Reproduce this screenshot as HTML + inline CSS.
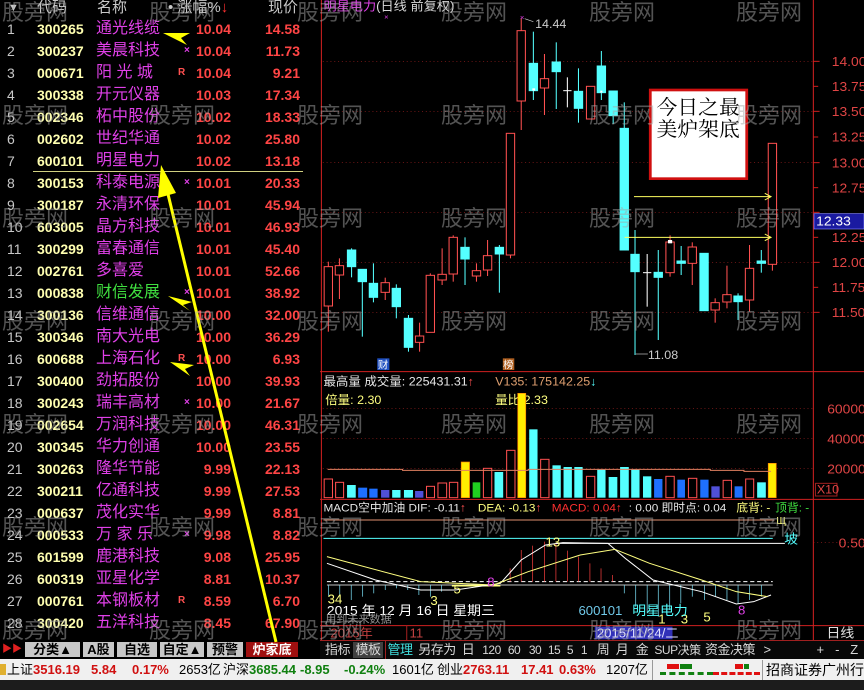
<!DOCTYPE html>
<html><head><meta charset="utf-8"><style>
*{margin:0;padding:0;box-sizing:border-box}
body{width:864px;height:690px;background:#000;position:relative;overflow:hidden;font-family:"Liberation Sans","Noto Sans CJK SC",sans-serif;}
.a{position:absolute;white-space:nowrap}
.r{position:absolute;left:0;width:320px;height:18px;line-height:18px}
.r span{position:absolute;top:0}
.i{left:7px;color:#c8c8c8;font-size:14px}
.c{left:37px;color:#ffffb0;font-size:14px;font-weight:bold}
.n{left:96px;color:#e040e8;font-size:16px}
.f{left:178px;color:#ff5050;font-size:10px;font-weight:bold}
.p{right:89px;color:#ff4545;font-size:14px;font-weight:bold}
.q{right:20px;color:#ff4545;font-size:14px;font-weight:bold}
.wm{position:absolute;font-size:22px;line-height:22px;color:rgba(165,165,165,.5);font-family:"Noto Sans CJK SC",sans-serif;z-index:10;white-space:nowrap}
.tab{position:absolute;top:642px;height:15px;line-height:15px;font-size:13px;font-weight:bold;text-align:center;background:#c8c8c8;color:#000}
.tb{position:absolute;top:642px;height:16px;line-height:16px;font-size:13px;color:#d8d8d8;text-align:center;white-space:nowrap;letter-spacing:-0.5px}
.st{position:absolute;top:660px;height:20px;line-height:20px;font-size:13px;white-space:nowrap}
</style></head><body>

<div class="a" style="left:8px;top:0;color:#c8c8c8;font-size:11px;line-height:16px">▼</div>
<div class="a" style="left:37px;top:-1px;color:#c8c8c8;font-size:15px;line-height:18px">代码</div>
<div class="a" style="left:97px;top:-1px;color:#c8c8c8;font-size:15px;line-height:18px">名称</div>
<div class="a" style="left:168px;top:-1px;color:#c8c8c8;font-size:15px;line-height:18px">• 涨幅%<span style="color:#ff3030">↓</span></div>
<div class="a" style="left:268px;top:-1px;color:#c8c8c8;font-size:15px;line-height:18px">现价</div>

<div class="r" style="top:20px"><span class="i">1</span><span class="c">300265</span><span class="n">通光线缆</span><span class="p">10.04</span><span class="q">14.58</span></div>
<div class="r" style="top:42px"><span class="i">2</span><span class="c">300237</span><span class="n">美晨科技</span><span class="f" style="left:184px;color:#e040e8">×</span><span class="p">10.04</span><span class="q">11.73</span></div>
<div class="r" style="top:64px"><span class="i">3</span><span class="c">000671</span><span class="n">阳 光 城</span><span class="f">R</span><span class="p">10.04</span><span class="q">9.21</span></div>
<div class="r" style="top:86px"><span class="i">4</span><span class="c">300338</span><span class="n">开元仪器</span><span class="p">10.03</span><span class="q">17.34</span></div>
<div class="r" style="top:108px"><span class="i">5</span><span class="c">002346</span><span class="n">柘中股份</span><span class="p">10.02</span><span class="q">18.33</span></div>
<div class="r" style="top:130px"><span class="i">6</span><span class="c">002602</span><span class="n">世纪华通</span><span class="p">10.02</span><span class="q">25.80</span></div>
<div class="r" style="top:152px"><span class="i">7</span><span class="c">600101</span><span class="n">明星电力</span><span class="p">10.02</span><span class="q">13.18</span></div>
<div class="a" style="left:33px;top:171px;width:270px;height:1px;background:#d0d080"></div>
<div class="r" style="top:174px"><span class="i">8</span><span class="c">300153</span><span class="n">科泰电源</span><span class="f" style="left:184px;color:#e040e8">×</span><span class="p">10.01</span><span class="q">20.33</span></div>
<div class="r" style="top:196px"><span class="i">9</span><span class="c">300187</span><span class="n">永清环保</span><span class="p">10.01</span><span class="q">45.94</span></div>
<div class="r" style="top:218px"><span class="i">10</span><span class="c">603005</span><span class="n">晶方科技</span><span class="p">10.01</span><span class="q">46.93</span></div>
<div class="r" style="top:240px"><span class="i">11</span><span class="c">300299</span><span class="n">富春通信</span><span class="p">10.01</span><span class="q">45.40</span></div>
<div class="r" style="top:262px"><span class="i">12</span><span class="c">002761</span><span class="n">多喜爱</span><span class="p">10.01</span><span class="q">52.66</span></div>
<div class="r" style="top:284px"><span class="i">13</span><span class="c">000838</span><span class="n" style="color:#40e040">财信发展</span><span class="f" style="left:184px;color:#e040e8">×</span><span class="p">10.01</span><span class="q">38.92</span></div>
<div class="r" style="top:306px"><span class="i">14</span><span class="c">300136</span><span class="n">信维通信</span><span class="p">10.00</span><span class="q">32.00</span></div>
<div class="r" style="top:328px"><span class="i">15</span><span class="c">300346</span><span class="n">南大光电</span><span class="p">10.00</span><span class="q">36.29</span></div>
<div class="r" style="top:350px"><span class="i">16</span><span class="c">600688</span><span class="n">上海石化</span><span class="f">R</span><span class="p">10.00</span><span class="q">6.93</span></div>
<div class="r" style="top:372px"><span class="i">17</span><span class="c">300400</span><span class="n">劲拓股份</span><span class="p">10.00</span><span class="q">39.93</span></div>
<div class="r" style="top:394px"><span class="i">18</span><span class="c">300243</span><span class="n">瑞丰高材</span><span class="f" style="left:184px;color:#e040e8">×</span><span class="p">10.00</span><span class="q">21.67</span></div>
<div class="r" style="top:416px"><span class="i">19</span><span class="c">002654</span><span class="n">万润科技</span><span class="p">10.00</span><span class="q">46.31</span></div>
<div class="r" style="top:438px"><span class="i">20</span><span class="c">300345</span><span class="n">华力创通</span><span class="p">10.00</span><span class="q">23.55</span></div>
<div class="r" style="top:460px"><span class="i">21</span><span class="c">300263</span><span class="n">隆华节能</span><span class="p">9.99</span><span class="q">22.13</span></div>
<div class="r" style="top:482px"><span class="i">22</span><span class="c">300211</span><span class="n">亿通科技</span><span class="p">9.99</span><span class="q">27.53</span></div>
<div class="r" style="top:504px"><span class="i">23</span><span class="c">000637</span><span class="n">茂化实华</span><span class="p">9.99</span><span class="q">8.81</span></div>
<div class="r" style="top:526px"><span class="i">24</span><span class="c">000533</span><span class="n">万 家 乐</span><span class="f" style="left:184px;color:#e040e8">×</span><span class="p">9.98</span><span class="q">8.82</span></div>
<div class="r" style="top:548px"><span class="i">25</span><span class="c">601599</span><span class="n">鹿港科技</span><span class="p">9.08</span><span class="q">25.95</span></div>
<div class="r" style="top:570px"><span class="i">26</span><span class="c">600319</span><span class="n">亚星化学</span><span class="p">8.81</span><span class="q">10.37</span></div>
<div class="r" style="top:592px"><span class="i">27</span><span class="c">000761</span><span class="n">本钢板材</span><span class="f">R</span><span class="p">8.59</span><span class="q">6.70</span></div>
<div class="r" style="top:614px"><span class="i">28</span><span class="c">300420</span><span class="n">五洋科技</span><span class="p">8.45</span><span class="q">67.90</span></div>

<div class="a" style="left:0;top:641px;width:320px;height:18px;background:#000"></div>
<div class="a" style="left:2px;top:644px;color:#e02020;font-size:10px;line-height:12px">▶▶</div>
<div class="tab" style="left:25px;width:55px">分类▲</div>
<div class="tab" style="left:83px;width:31px">A股</div>
<div class="tab" style="left:117px;width:40px">自选</div>
<div class="tab" style="left:160px;width:44px">自定▲</div>
<div class="tab" style="left:207px;width:36px">预警</div>
<div class="tab" style="left:246px;width:52px;background:#a01010;color:#fff">炉家底</div>

<svg class="a" style="left:320px;top:0" width="544" height="640" viewBox="0 0 1568 1920" preserveAspectRatio="none" font-family="Liberation Sans, Noto Sans CJK SC, sans-serif">
<g stroke="#d02020" stroke-width="3">
<line x1="4" y1="0" x2="4" y2="1920"/>
<line x1="1422" y1="0" x2="1422" y2="1920"/>
<line x1="0" y1="1115" x2="1568" y2="1115"/>
<line x1="0" y1="1498" x2="1568" y2="1498"/>
<line x1="0" y1="1877" x2="1568" y2="1877"/>
</g>
<g stroke="#a02020" stroke-width="2" stroke-dasharray="3,8">
<line x1="8" y1="184" x2="1422" y2="184"/><line x1="8" y1="334" x2="1422" y2="334"/>
<line x1="8" y1="488" x2="1422" y2="488"/><line x1="8" y1="637" x2="1422" y2="637"/>
<line x1="8" y1="787" x2="1422" y2="787"/><line x1="8" y1="937" x2="1422" y2="937"/>
<line x1="8" y1="1225" x2="1422" y2="1225"/><line x1="8" y1="1315" x2="1422" y2="1315"/><line x1="8" y1="1405" x2="1422" y2="1405"/>
<line x1="1422" y1="1628" x2="1568" y2="1628"/>
</g>
<g stroke="#d02020" stroke-width="3">
<line x1="1422" y1="184" x2="1440" y2="184"/><line x1="1422" y1="259" x2="1436" y2="259"/><line x1="1422" y1="334" x2="1440" y2="334"/><line x1="1422" y1="411" x2="1436" y2="411"/><line x1="1422" y1="488" x2="1440" y2="488"/><line x1="1422" y1="563" x2="1436" y2="563"/><line x1="1422" y1="637" x2="1440" y2="637"/><line x1="1422" y1="712" x2="1436" y2="712"/><line x1="1422" y1="787" x2="1440" y2="787"/><line x1="1422" y1="862" x2="1436" y2="862"/><line x1="1422" y1="937" x2="1440" y2="937"/>
</g>
<g fill="#e04545" font-size="40">
<text x="1475" y="198">14.00</text><text x="1475" y="273">13.75</text><text x="1475" y="348">13.50</text><text x="1475" y="425">13.25</text><text x="1475" y="502">13.00</text><text x="1475" y="577">12.75</text><text x="1475" y="726">12.25</text><text x="1475" y="801">12.00</text><text x="1475" y="876">11.75</text><text x="1475" y="951">11.50</text>
<text x="1462" y="1240">60000</text><text x="1462" y="1330">40000</text><text x="1462" y="1420">20000</text>
<text x="1495" y="1642">0.50</text>
</g>
<rect x="1424" y="641" width="144" height="46" fill="#1a1aa0" stroke="#8080ff" stroke-width="2"/>
<text x="1430" y="676" fill="#fff" font-size="40">12.33</text>
<text x="10" y="32" font-size="38" fill="#d8d8d8"><tspan fill="#e040e8">明星电力</tspan>(日线 前复权)</text>
<text x="185" y="58" fill="#e040e8" font-size="22">×</text>

<g stroke="#ff5050" stroke-width="3" fill="#000">
<line x1="24" y1="785" x2="24" y2="995"/><rect x="12" y="800" width="24" height="118"/>
<line x1="56" y1="775" x2="56" y2="897"/><rect x="44" y="797" width="24" height="28"/>
<line x1="188" y1="833" x2="188" y2="900"/><rect x="176" y="848" width="24" height="29"/>
<line x1="287" y1="968" x2="287" y2="1055"/><rect x="275" y="1008" width="24" height="19"/>
<line x1="318" y1="820" x2="318" y2="997"/><rect x="306" y="826" width="24" height="171"/>
<line x1="352" y1="745" x2="352" y2="855"/><rect x="340" y="823" width="24" height="17"/>
<line x1="384" y1="706" x2="384" y2="845"/><rect x="372" y="712" width="24" height="110"/>
<line x1="451" y1="790" x2="451" y2="845"/><rect x="439" y="812" width="24" height="16"/>
<line x1="483" y1="720" x2="483" y2="828"/><rect x="471" y="767" width="24" height="43"/>
<line x1="549" y1="400" x2="549" y2="775"/><rect x="537" y="400" width="24" height="365"/>
<line x1="580" y1="55" x2="580" y2="390"/><rect x="568" y="92" width="24" height="211"/>
<line x1="647" y1="162" x2="647" y2="345"/><rect x="635" y="236" width="24" height="28"/>
<line x1="780" y1="259" x2="780" y2="357"/><rect x="768" y="259" width="24" height="98"/>
<line x1="1009" y1="706" x2="1009" y2="830"/><rect x="997" y="726" width="24" height="92"/>
<line x1="1073" y1="727" x2="1073" y2="855"/><rect x="1061" y="741" width="24" height="49"/>
<line x1="1139" y1="895" x2="1139" y2="968"/><rect x="1127" y="908" width="24" height="22"/>
<line x1="1173" y1="797" x2="1173" y2="925"/><rect x="1161" y="884" width="24" height="22"/>
<line x1="1238" y1="735" x2="1238" y2="935"/><rect x="1226" y="805" width="24" height="95"/>
<line x1="1304" y1="430" x2="1304" y2="812"/><rect x="1292" y="430" width="24" height="363"/>
</g>
<rect x="1003" y="720" width="12" height="10" fill="#fff"/>
<g stroke="#54ffff" stroke-width="3" fill="#54ffff">
<line x1="91" y1="745" x2="91" y2="832"/><rect x="79" y="750" width="24" height="50"/>
<line x1="122" y1="808" x2="122" y2="1010"/><rect x="110" y="808" width="24" height="37"/>
<line x1="154" y1="790" x2="154" y2="907"/><rect x="142" y="850" width="24" height="42"/>
<line x1="220" y1="853" x2="220" y2="955"/><rect x="208" y="865" width="24" height="55"/>
<line x1="255" y1="945" x2="255" y2="1055"/><rect x="243" y="955" width="24" height="87"/>
<line x1="418" y1="712" x2="418" y2="855"/><rect x="406" y="742" width="24" height="35"/>
<line x1="517" y1="735" x2="517" y2="878"/><rect x="505" y="742" width="24" height="20"/>
<line x1="615" y1="95" x2="615" y2="300"/><rect x="603" y="190" width="24" height="82"/>
<line x1="681" y1="127" x2="681" y2="327"/><rect x="669" y="186" width="24" height="29"/>
<line x1="745" y1="205" x2="745" y2="368"/><rect x="733" y="274" width="24" height="51"/>
<line x1="811" y1="153" x2="811" y2="300"/><rect x="799" y="198" width="24" height="80"/>
<line x1="845" y1="273" x2="845" y2="372"/><rect x="833" y="273" width="24" height="74"/>
<line x1="877" y1="307" x2="877" y2="385"/><rect x="865" y="385" width="24" height="365"/>
<line x1="908" y1="690" x2="908" y2="1065"/><rect x="896" y="763" width="24" height="52"/>
<line x1="975" y1="750" x2="975" y2="1020"/><rect x="963" y="817" width="24" height="15"/>
<line x1="1041" y1="738" x2="1041" y2="825"/><rect x="1029" y="783" width="24" height="7"/>
<rect x="1095" y="760" width="24" height="172"/>
<line x1="1205" y1="880" x2="1205" y2="960"/><rect x="1193" y="888" width="24" height="17"/>
<line x1="1272" y1="750" x2="1272" y2="818"/><rect x="1260" y="783" width="24" height="7"/>
</g>
<rect x="612" y="265" width="8" height="7" fill="#fff"/><rect x="808" y="272" width="6" height="6" fill="#fff"/>
<g stroke="#fff" stroke-width="3">
<line x1="713" y1="232" x2="713" y2="322"/><line x1="701" y1="272" x2="725" y2="272"/>
<line x1="943" y1="762" x2="943" y2="920"/><line x1="931" y1="818" x2="955" y2="818"/>
</g>
<text x="576" y="60" fill="#e040e8" font-size="22">×</text>
<line x1="590" y1="56" x2="615" y2="65" stroke="#ccc" stroke-width="2"/>
<text x="620" y="84" fill="#ccc" font-size="36">14.44</text>
<line x1="910" y1="1062" x2="945" y2="1062" stroke="#ccc" stroke-width="2"/>
<text x="945" y="1077" fill="#ccc" font-size="36">11.08</text>
<rect x="165" y="1075" width="35" height="35" fill="#2050c0"/><text x="167" y="1106" fill="#fff" font-size="30">财</text>
<rect x="527" y="1075" width="33" height="35" fill="#b06020"/><text x="528" y="1106" fill="#fff" font-size="30">榜</text>
<g stroke="#ffff60" stroke-width="3" fill="none">
<line x1="905" y1="590" x2="1300" y2="590"/><path d="M1282 580 L1300 590 L1282 600"/>
<line x1="878" y1="712" x2="1300" y2="712"/><path d="M1282 702 L1300 712 L1282 722"/>
</g>
<rect x="952" y="270" width="278" height="266" fill="#fff" stroke="#d01010" stroke-width="8"/>
<text x="970" y="342" font-size="60" fill="#000" font-family="Noto Serif CJK SC, serif" textLength="240">今日之最</text>
<text x="970" y="408" font-size="60" fill="#000" font-family="Noto Serif CJK SC, serif" textLength="240">美炉架底</text>

<text x="10" y="1157" fill="#e8e8e8" font-size="36">最高量 成交量: 225431.31<tspan fill="#ff5050">↑</tspan></text>
<text x="505" y="1157" fill="#e0a070" font-size="36">V135: 175142.25<tspan fill="#54ffff">↓</tspan></text>
<text x="15" y="1212" fill="#ffff80" font-size="36">倍量: 2.30</text>
<text x="505" y="1212" fill="#ffff80" font-size="36">量比  2.33</text>
<g stroke="#ff5050" stroke-width="3" fill="#000">
<rect x="12" y="1437" width="24" height="56"/><rect x="45" y="1447" width="23" height="46"/>
<rect x="307" y="1459" width="23" height="34"/><rect x="340" y="1449" width="25" height="44"/><rect x="373" y="1447" width="24" height="46"/>
<rect x="471" y="1405" width="24" height="88"/><rect x="538" y="1351" width="24" height="142"/><rect x="636" y="1378" width="24" height="115"/>
<rect x="768" y="1429" width="24" height="64"/><rect x="997" y="1429" width="24" height="64"/><rect x="1062" y="1435" width="24" height="58"/>
<rect x="1162" y="1441" width="24" height="52"/><rect x="1227" y="1437" width="23" height="56"/>
</g>
<g fill="#54ffff">
<rect x="78" y="1455" width="25" height="38"/><rect x="208" y="1470" width="24" height="23"/><rect x="242" y="1470" width="26" height="23"/>
<rect x="503" y="1416" width="25" height="77"/><rect x="603" y="1288" width="24" height="205"/><rect x="670" y="1396" width="24" height="97"/>
<rect x="702" y="1401" width="24" height="92"/><rect x="733" y="1401" width="24" height="92"/><rect x="799" y="1409" width="24" height="84"/>
<rect x="832" y="1431" width="25" height="62"/><rect x="865" y="1401" width="25" height="92"/><rect x="897" y="1409" width="24" height="84"/>
<rect x="931" y="1429" width="24" height="64"/><rect x="1260" y="1447" width="25" height="46"/>
</g>
<g fill="#1e70ff">
<rect x="110" y="1463" width="26" height="30"/><rect x="142" y="1466" width="24" height="27"/><rect x="963" y="1437" width="24" height="56"/>
<rect x="1030" y="1439" width="22" height="54"/><rect x="1096" y="1439" width="24" height="54"/><rect x="1195" y="1459" width="23" height="34"/>
</g>
<g fill="#5050d8"><rect x="176" y="1470" width="24" height="23"/><rect x="274" y="1473" width="24" height="20"/><rect x="1128" y="1459" width="24" height="34"/></g>
<g fill="#ffee00" stroke="#ff8000" stroke-width="2">
<rect x="407" y="1386" width="24" height="107"/><rect x="570" y="1180" width="23" height="313"/><rect x="1292" y="1390" width="23" height="103"/>
</g>
<rect x="440" y="1447" width="22" height="46" fill="#20d020"/>
<polyline points="22,1408 238,1408 238,1411 600,1411 600,1408 1125,1408 1125,1411 1222,1411 1222,1414 1300,1414" stroke="#e08060" stroke-width="3" fill="none"/>
<rect x="1428" y="1450" width="62" height="38" fill="none" stroke="#a02020" stroke-width="3"/>
<text x="1432" y="1480" fill="#e04545" font-size="36">X10</text>

<text x="10" y="1534" fill="#e8e8e8" font-size="34">MACD空中加油  DIF: -0.11<tspan fill="#ff5050">↑</tspan></text>
<text x="455" y="1534" fill="#ffff80" font-size="34">DEA: -0.13<tspan fill="#ff5050">↑</tspan></text>
<text x="668" y="1534" fill="#ff3030" font-size="34">MACD: 0.04<tspan>↑</tspan></text>
<text x="890" y="1534" fill="#e8e8e8" font-size="34">: 0.00 即时点: 0.04</text>
<text x="1200" y="1534" fill="#ffff80" font-size="34">底背: -</text>
<text x="1312" y="1534" fill="#40e040" font-size="34">顶背: -</text>
<line x1="10" y1="1560" x2="1310" y2="1560" stroke="#e09070" stroke-width="3"/>
<line x1="10" y1="1615" x2="1305" y2="1615" stroke="#54ffff" stroke-width="3"/>
<line x1="680" y1="1630" x2="1340" y2="1630" stroke="#fff" stroke-width="3"/>
<text x="1315" y="1572" fill="#ffff80" font-size="30">Щ</text>
<text x="1338" y="1630" fill="#54ffff" font-size="40">坡</text>
<line x1="20" y1="1745" x2="1305" y2="1745" stroke="#fff" stroke-width="3" stroke-dasharray="12,8"/>
<line x1="20" y1="1755" x2="1305" y2="1755" stroke="#fff" stroke-width="2"/>
<g stroke="#80e8ff" stroke-width="2">
<line x1="25" y1="1755" x2="25" y2="1790"/><line x1="57" y1="1755" x2="57" y2="1790"/><line x1="90" y1="1755" x2="90" y2="1800"/><line x1="123" y1="1755" x2="123" y2="1790"/><line x1="155" y1="1755" x2="155" y2="1780"/><line x1="188" y1="1755" x2="188" y2="1770"/><line x1="220" y1="1755" x2="220" y2="1765"/><line x1="253" y1="1755" x2="253" y2="1770"/><line x1="285" y1="1755" x2="285" y2="1785"/><line x1="318" y1="1755" x2="318" y2="1790"/><line x1="350" y1="1755" x2="350" y2="1775"/><line x1="383" y1="1755" x2="383" y2="1760"/>
<line x1="877" y1="1755" x2="877" y2="1780"/><line x1="910" y1="1755" x2="910" y2="1820"/><line x1="943" y1="1755" x2="943" y2="1840"/><line x1="975" y1="1755" x2="975" y2="1850"/><line x1="1008" y1="1755" x2="1008" y2="1830"/><line x1="1040" y1="1755" x2="1040" y2="1810"/><line x1="1073" y1="1755" x2="1073" y2="1790"/><line x1="1108" y1="1755" x2="1108" y2="1800"/><line x1="1140" y1="1755" x2="1140" y2="1790"/><line x1="1173" y1="1755" x2="1173" y2="1800"/><line x1="1205" y1="1755" x2="1205" y2="1810"/><line x1="1238" y1="1755" x2="1238" y2="1800"/><line x1="1272" y1="1755" x2="1272" y2="1790"/>
</g>
<g stroke="#ff4040" stroke-width="2">
<line x1="548" y1="1745" x2="548" y2="1705"/><line x1="580" y1="1745" x2="580" y2="1650"/><line x1="613" y1="1745" x2="613" y2="1637"/><line x1="647" y1="1745" x2="647" y2="1625"/><line x1="680" y1="1745" x2="680" y2="1630"/><line x1="713" y1="1745" x2="713" y2="1652"/><line x1="745" y1="1745" x2="745" y2="1670"/><line x1="778" y1="1745" x2="778" y2="1690"/><line x1="810" y1="1745" x2="810" y2="1705"/><line x1="843" y1="1745" x2="843" y2="1725"/>
</g>
<line x1="380" y1="1757" x2="520" y2="1757" stroke="#ffff80" stroke-width="5"/>
<polyline points="20,1690 160,1740 290,1770 390,1770 520,1750 580,1680 650,1635 700,1628 830,1630 880,1675 960,1740 1000,1750 1100,1775 1200,1812 1250,1805 1300,1785" fill="none" stroke="#fff" stroke-width="3"/>
<polyline points="20,1670 290,1745 500,1755 600,1715 750,1665 850,1648 950,1690 1100,1740 1200,1775 1290,1790" fill="none" stroke="#ffff80" stroke-width="3"/>
<g font-size="38" fill="#ffff80"><text x="22" y="1810">34</text><text x="318" y="1815">3</text><text x="385" y="1780">5</text><text x="650" y="1640">13</text><text x="975" y="1870">1</text><text x="1040" y="1870">3</text><text x="1105" y="1865">5</text></g>
<text x="1205" y="1843" fill="#e040e8" font-size="38">8</text><text x="482" y="1760" fill="#e040e8" font-size="38">8</text>
<text x="20" y="1845" fill="#fff" font-size="40">2015 年 12 月 16 日 星期三</text>
<text x="745" y="1845" fill="#70c8e8" font-size="38">600101</text>
<text x="900" y="1845" fill="#54ffff" font-size="40">明星电力</text>
<text x="15" y="1868" fill="#909090" font-size="32">用到未来数据</text>
<text x="30" y="1912" fill="#c04040" font-size="38">2015年</text>
<line x1="250" y1="1877" x2="250" y2="1920" stroke="#a02020" stroke-width="3"/>
<text x="258" y="1912" fill="#c04040" font-size="38">11</text>
<rect x="792" y="1880" width="224" height="38" fill="#3030b8"/>
<text x="798" y="1912" fill="#e0e0ff" font-size="38">2015/11/24/二</text>
<text x="1460" y="1912" fill="#e0e0e0" font-size="40">日线</text>
</svg>

<div class="a" style="left:320px;top:640px;width:544px;height:20px;background:#080808;border-top:1px solid #a02020"></div>
<div class="a" style="left:385px;top:641px;width:1px;height:18px;background:#a02020"></div>
<div class="tb" style="left:324px;width:27px">指标</div>
<div class="tb" style="left:353px;width:30px;background:#404040">模板</div>
<div class="tb" style="left:386px;width:28px;color:#40e0e0">管理</div>
<div class="tb" style="left:416px;width:42px">另存为</div>
<div class="tb" style="left:461px;width:14px">日</div>
<div class="tb" style="left:480px;width:23px;font-size:12px">120</div>
<div class="tb" style="left:506px;width:16px;font-size:12px">60</div>
<div class="tb" style="left:527px;width:16px;font-size:12px">30</div>
<div class="tb" style="left:546px;width:16px;font-size:12px">15</div>
<div class="tb" style="left:565px;width:10px;font-size:12px">5</div>
<div class="tb" style="left:579px;width:10px;font-size:12px">1</div>
<div class="tb" style="left:595px;width:16px">周</div>
<div class="tb" style="left:614px;width:16px">月</div>
<div class="tb" style="left:634px;width:16px">金</div>
<div class="tb" style="left:654px;width:47px;font-size:12px">SUP决策</div>
<div class="tb" style="left:704px;width:52px">资金决策</div>
<div class="tb" style="left:762px;width:10px">&gt;</div>
<div class="tb" style="left:815px;width:10px">+</div>
<div class="tb" style="left:832px;width:10px">-</div>
<div class="tb" style="left:848px;width:12px">Z</div>

<div class="a" style="left:0;top:659px;width:864px;height:21px;background:#f0f0f0"></div>
<div class="a" style="left:0;top:664px;width:6px;height:11px;background:#e0b030"></div>
<div class="st" style="left:7px;color:#000">上证<b style="color:#d01010">3516.19</b></div>
<div class="st" style="left:91px;color:#d01010;font-weight:bold">5.84</div>
<div class="st" style="left:132px;color:#d01010;font-weight:bold">0.17%</div>
<div class="st" style="left:179px;color:#000">2653亿</div>
<div class="st" style="left:223px;color:#000">沪深<b style="color:#108010">3685.44</b></div>
<div class="st" style="left:300px;color:#108010;font-weight:bold">-8.95</div>
<div class="st" style="left:344px;color:#108010;font-weight:bold">-0.24%</div>
<div class="st" style="left:392px;color:#000">1601亿</div>
<div class="st" style="left:437px;color:#000">创业<b style="color:#d01010">2763.11</b></div>
<div class="st" style="left:521px;color:#d01010;font-weight:bold">17.41</div>
<div class="st" style="left:559px;color:#d01010;font-weight:bold">0.63%</div>
<div class="st" style="left:606px;color:#000">1207亿</div>
<div class="a" style="left:652px;top:660px;width:1px;height:20px;background:#999"></div>
<div class="a" style="left:667px;top:664px;width:12px;height:5px;background:#e01010"></div>
<div class="a" style="left:680px;top:664px;width:12px;height:5px;background:#108010"></div>
<div class="a" style="left:660px;top:672px;width:53px;height:0;border-top:3px dashed #108010"></div>
<div class="a" style="left:735px;top:664px;width:8px;height:5px;background:#e01010"></div>
<div class="a" style="left:744px;top:664px;width:5px;height:5px;background:#108010"></div>
<div class="a" style="left:713px;top:672px;width:47px;height:0;border-top:3px dashed #e01010"></div>
<div class="a" style="left:762px;top:660px;width:1px;height:20px;background:#999"></div>
<div class="st" style="left:766px;color:#000;font-size:14px">招商证券广州行情</div>
<div class="a" style="left:0;top:680px;width:864px;height:10px;background:#1c1c1c"></div>

<svg class="a" style="left:0;top:0;z-index:5" width="320" height="660">
<g fill="#ffff00">
<polygon points="163,33 190,33 181,38 187,45"/>
<polygon points="168,296 192,302 183,305 190,311"/>
<polygon points="170,362 194,365 185,369 190,376"/>
<polygon points="161,165 158,198 176,193"/>
</g>
<line x1="167" y1="190" x2="276" y2="642" stroke="#ffff00" stroke-width="3"/>
</svg>

<div class="wm" style="left:2px;top:0">股旁网</div><div class="wm" style="left:149px;top:0">股旁网</div><div class="wm" style="left:297px;top:0">股旁网</div><div class="wm" style="left:441px;top:0">股旁网</div><div class="wm" style="left:589px;top:0">股旁网</div><div class="wm" style="left:736px;top:0">股旁网</div>
<div class="wm" style="left:2px;top:103px">股旁网</div><div class="wm" style="left:149px;top:103px">股旁网</div><div class="wm" style="left:297px;top:103px">股旁网</div><div class="wm" style="left:441px;top:103px">股旁网</div><div class="wm" style="left:589px;top:103px">股旁网</div><div class="wm" style="left:736px;top:103px">股旁网</div>
<div class="wm" style="left:2px;top:206px">股旁网</div><div class="wm" style="left:149px;top:206px">股旁网</div><div class="wm" style="left:297px;top:206px">股旁网</div><div class="wm" style="left:441px;top:206px">股旁网</div><div class="wm" style="left:589px;top:206px">股旁网</div><div class="wm" style="left:736px;top:206px">股旁网</div>
<div class="wm" style="left:2px;top:309px">股旁网</div><div class="wm" style="left:149px;top:309px">股旁网</div><div class="wm" style="left:297px;top:309px">股旁网</div><div class="wm" style="left:441px;top:309px">股旁网</div><div class="wm" style="left:589px;top:309px">股旁网</div><div class="wm" style="left:736px;top:309px">股旁网</div>
<div class="wm" style="left:2px;top:412px">股旁网</div><div class="wm" style="left:149px;top:412px">股旁网</div><div class="wm" style="left:297px;top:412px">股旁网</div><div class="wm" style="left:441px;top:412px">股旁网</div><div class="wm" style="left:589px;top:412px">股旁网</div><div class="wm" style="left:736px;top:412px">股旁网</div>
<div class="wm" style="left:2px;top:515px">股旁网</div><div class="wm" style="left:149px;top:515px">股旁网</div><div class="wm" style="left:297px;top:515px">股旁网</div><div class="wm" style="left:441px;top:515px">股旁网</div><div class="wm" style="left:589px;top:515px">股旁网</div><div class="wm" style="left:736px;top:515px">股旁网</div>
<div class="wm" style="left:2px;top:618px">股旁网</div><div class="wm" style="left:149px;top:618px">股旁网</div><div class="wm" style="left:297px;top:618px">股旁网</div><div class="wm" style="left:441px;top:618px">股旁网</div><div class="wm" style="left:589px;top:618px">股旁网</div><div class="wm" style="left:736px;top:618px">股旁网</div>
</body></html>
